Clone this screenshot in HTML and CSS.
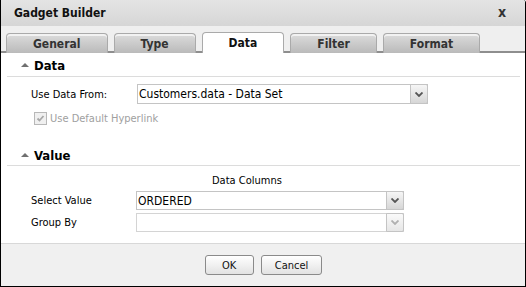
FILE: index.html
```html
<!DOCTYPE html>
<html lang="en">
<head>
  <meta charset="UTF-8">
  <title>Gadget Builder</title>
  <link rel="stylesheet" href="styles.css">
</head>
<body>
  <div class="dialog">
    <div class="titlebar">
      <span class="title">Gadget Builder</span>
      <span class="close">x</span>
    </div>
    <div class="tabs">
      <div class="tab">General</div>
      <div class="tab">Type</div>
      <div class="tab active">Data</div>
      <div class="tab">Filter</div>
      <div class="tab">Format</div>
    </div>
    <div class="content">
      <div class="section-head">
        <span class="arrow"></span>
        <span>Data</span>
      </div>
      <div class="row row-source">
        <label class="label">Use Data From:</label>
        <div class="select wide">
          <span class="value">Customers.data - Data Set</span>
          <span class="drop">
            <svg viewBox="0 0 8 5"><path d="M0.5 0.5L4 4L7.5 0.5" fill="none" stroke="currentColor" stroke-width="1.8"/></svg>
          </span>
        </div>
      </div>
      <div class="row row-check">
        <span class="checkbox">
          <svg viewBox="0 0 9 9"><path d="M1.5 4.5L3.5 6.5L7.5 2" fill="none" stroke="currentColor" stroke-width="1.8"/></svg>
        </span>
        <span class="check-text">Use Default Hyperlink</span>
      </div>

      <div class="section-head second">
        <span class="arrow"></span>
        <span>Value</span>
      </div>
      <div class="columns-title">Data Columns</div>
      <div class="row row-value">
        <label class="label">Select Value</label>
        <div class="select">
          <span class="value">ORDERED</span>
          <span class="drop">
            <svg viewBox="0 0 8 5"><path d="M0.5 0.5L4 4L7.5 0.5" fill="none" stroke="currentColor" stroke-width="1.8"/></svg>
          </span>
        </div>
      </div>
      <div class="row row-group">
        <label class="label">Group By</label>
        <div class="select disabled">
          <span class="value"></span>
          <span class="drop">
            <svg viewBox="0 0 8 5"><path d="M0.5 0.5L4 4L7.5 0.5" fill="none" stroke="currentColor" stroke-width="1.8"/></svg>
          </span>
        </div>
      </div>
    </div>
    <div class="footer">
      <button class="button">OK</button>
      <button class="button">Cancel</button>
    </div>
  </div>
</body>
</html>
```

FILE: styles.css
```css
* {
  margin: 0;
  padding: 0;
  box-sizing: border-box;
}

body {
  font-family: Tahoma, "DejaVu Sans Condensed", "DejaVu Sans", sans-serif;
  font-size: 11px;
  color: #000;
  background: #fff;
}

.dialog {
  width: 526px;
  height: 287px;
  border: 1px solid #000;
  border-top: none;
  border-top-right-radius: 3px;
  display: flex;
  flex-direction: column;
  overflow: hidden;
}

.titlebar {
  height: 26px;
  flex-shrink: 0;
  display: flex;
  align-items: center;
  justify-content: space-between;
  padding: 0 19px 0 13px;
  background: linear-gradient(#e4e4e4, #d6d6d6);
}

.title {
  font-weight: bold;
  font-size: 12px;
  color: #111;
}

.close {
  font-weight: bold;
  font-size: 14px;
  color: #333;
  line-height: 1;
  margin-top: -2px;
}

.tabs {
  height: 27px;
  flex-shrink: 0;
  display: flex;
  align-items: flex-end;
  gap: 6px;
  padding-left: 5px;
  background: #efefef;
  border-bottom: 2px solid #8e8e8e;
}

.tab {
  height: 20px;
  margin-bottom: -2px;
  padding: 0 26px;
  display: flex;
  align-items: center;
  justify-content: center;
  font-weight: bold;
  font-size: 12px;
  color: #333;
  border: 1px solid #aaa;
  border-bottom: none;
  border-radius: 4px 4px 0 0;
  background: linear-gradient(#dcdcdc, #bababa);
  box-shadow: inset 0 2px 0 #f2f2f2;
}

.tab.active {
  height: 21px;
  background: #fff;
  box-shadow: none;
  color: #111;
}

.content {
  flex: 1;
  background: #fff;
  display: flex;
  flex-direction: column;
}

.section-head {
  height: 24px;
  margin: 0 5px 0 6px;
  padding: 2px 0 0 14px;
  display: flex;
  align-items: center;
  gap: 5px;
  font-weight: bold;
  font-size: 13px;
  border-bottom: 1px solid #dcdcdc;
}

.section-head.second {
  margin-top: 18px;
  height: 23px;
}

.arrow {
  width: 0;
  height: 0;
  border-left: 4px solid transparent;
  border-right: 4px solid transparent;
  border-bottom: 4px solid #707070;
  margin-top: -1px;
}

.row {
  display: flex;
  align-items: center;
  padding-left: 30px;
}

.label {
  width: 105px;
  flex-shrink: 0;
}

.row-source {
  margin-top: 7px;
}

.row-check {
  margin-top: 8px;
  padding-left: 33px;
  gap: 3px;
  color: #a0a0a0;
}

.checkbox {
  width: 13px;
  height: 13px;
  border: 1px solid #b8b8b8;
  background: #f0f0f0;
  color: #a8a8a8;
  display: flex;
  align-items: center;
  justify-content: center;
}

.checkbox svg {
  width: 9px;
  height: 9px;
}

.select {
  width: 268px;
  height: 19px;
  border: 1px solid #c4c4c4;
  display: flex;
  align-items: center;
  background: #fff;
}

.select.wide {
  width: 291px;
  height: 20px;
  margin-left: 1px;
}

.select .value {
  flex: 1;
  padding-left: 1px;
  font-size: 12px;
  white-space: nowrap;
}

.drop {
  width: 18px;
  height: calc(100% + 2px);
  margin: -1px -1px -1px 0;
  border: 1px solid #c4c4c4;
  border-radius: 0 2px 2px 0;
  background: linear-gradient(#f6f6f6, #d6d6d6);
  color: #555;
  display: flex;
  align-items: center;
  justify-content: center;
}

.drop svg {
  width: 8px;
  height: 5px;
}

.select.disabled .drop {
  color: #b0b0b0;
  background: linear-gradient(#fafafa, #e6e6e6);
}

.select.disabled {
  border-color: #d4d4d4;
}

.columns-title {
  margin-top: 8px;
  padding-left: 211px;
}

.row-value {
  margin-top: 4px;
}

.row-group {
  margin-top: 3px;
}

.footer {
  height: 43px;
  flex-shrink: 0;
  background: #f0f0f0;
  border-top: 1px solid #d8d8d8;
  display: flex;
  align-items: center;
  justify-content: center;
  gap: 7px;
  padding-left: 1px;
}

.button {
  height: 20px;
  min-width: 49px;
  padding: 0 13px;
  font-family: inherit;
  font-size: 11px;
  color: #111;
  border: 1px solid #8a8a8a;
  border-radius: 3px;
  background: linear-gradient(#ffffff, #e2e2e2);
}
```
